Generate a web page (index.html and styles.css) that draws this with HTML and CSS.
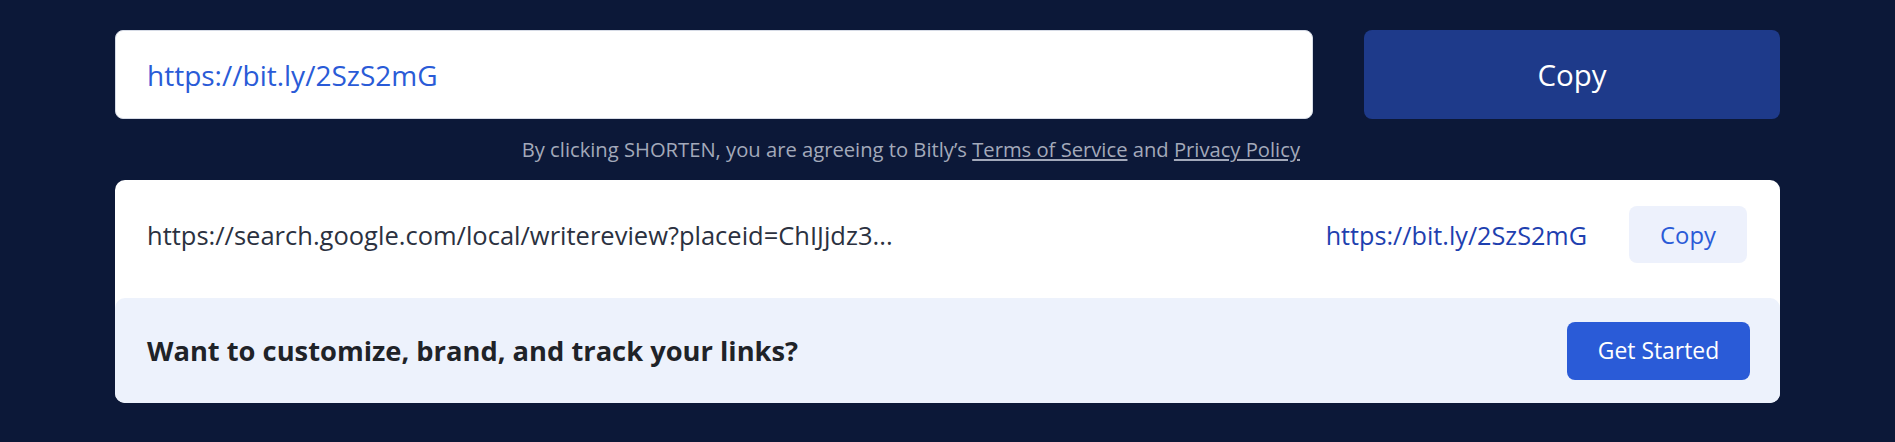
FILE: index.html
```html
<!DOCTYPE html>
<html lang="en">
<head>
<meta charset="utf-8">
<title>Bitly shorten</title>
<link rel="stylesheet" href="styles.css">
</head>
<body>
<main class="wrap">
  <div class="form">
    <div class="url-input"><span class="url-value">https://bit.ly/2SzS2mG</span></div>
    <button class="copy-main">Copy</button>
    <p class="disclaimer">By clicking SHORTEN, you are agreeing to Bitly’s <a href="#">Terms of Service</a> and <a href="#">Privacy Policy</a></p>
  </div>
  <section class="card">
    <div class="result">
      <span class="long-url">https://search.google.com/local/writereview?placeid=ChIJjdz3...</span>
      <a class="short-url" href="#">https://bit.ly/2SzS2mG</a>
      <button class="copy-small">Copy</button>
    </div>
    <div class="banner">
      <h2 class="banner-title">Want to customize, brand, and track your links?</h2>
      <button class="get-started">Get Started</button>
    </div>
  </section>
</main>
</body>
</html>
```
FILE: styles.css
```css
html, body {
  margin: 0;
  padding: 0;
  background: #0c1838;
  height: 100%;
}
body {
  font-family: "Open Sans", "Lato", sans-serif;
}
.wrap {
  padding: 30px 115px 0 115px;
}
.form {
  display: grid;
  grid-template-columns: 1fr 416px;
  column-gap: 51px;
}
.url-input {
  height: 89px;
  box-sizing: border-box;
  background: #fff;
  border: 1px solid #d6dbe6;
  border-radius: 8px;
  display: flex;
  align-items: center;
  padding-left: 31px;
}
.url-value {
  font-family: "Open Sans", sans-serif;
  font-size: 28px;
  color: #2a5bd7;
}
.copy-main {
  height: 89px;
  border: none;
  border-radius: 8px;
  background: #1e3a8a;
  color: #fff;
  font-family: "Open Sans", sans-serif;
  font-size: 29.5px;
  padding: 0;
}
.disclaimer {
  grid-column: 1;
  margin: 18px 0 19px 0;
  padding-right: 13px;
  text-align: right;
  font-size: 20.2px;
  line-height: 24px;
  color: #a3a9ba;
}
.disclaimer a {
  color: #a3a9ba;
  text-decoration: underline;
}
.card {
  background: #fff;
  border-radius: 10px;
}
.result {
  display: flex;
  align-items: center;
  padding: 26px 33px 35px 32px;
}
.long-url {
  flex: 1;
  font-size: 25.5px;
  color: #2b3140;
}
.short-url {
  font-size: 25.2px;
  color: #1e40af;
  text-decoration: none;
  margin-right: 42px;
}
.copy-small {
  width: 118px;
  height: 57px;
  border: none;
  border-radius: 8px;
  background: #edf1fc;
  color: #2a5bd7;
  font-family: "Open Sans", sans-serif;
  font-size: 23.8px;
  padding: 0;
}
.banner {
  background: #edf2fc;
  border-radius: 10px;
  height: 105px;
  box-sizing: border-box;
  display: flex;
  align-items: center;
  justify-content: space-between;
  padding: 0 30px 0 32px;
}
.banner-title {
  margin: 0;
  font-size: 27.3px;
  font-weight: 700;
  color: #1f2328;
}
.get-started {
  width: 183px;
  height: 58px;
  border: none;
  border-radius: 8px;
  background: #2a5bd7;
  color: #fff;
  font-family: "Open Sans", sans-serif;
  font-size: 22.9px;
  padding: 0;
}
```
